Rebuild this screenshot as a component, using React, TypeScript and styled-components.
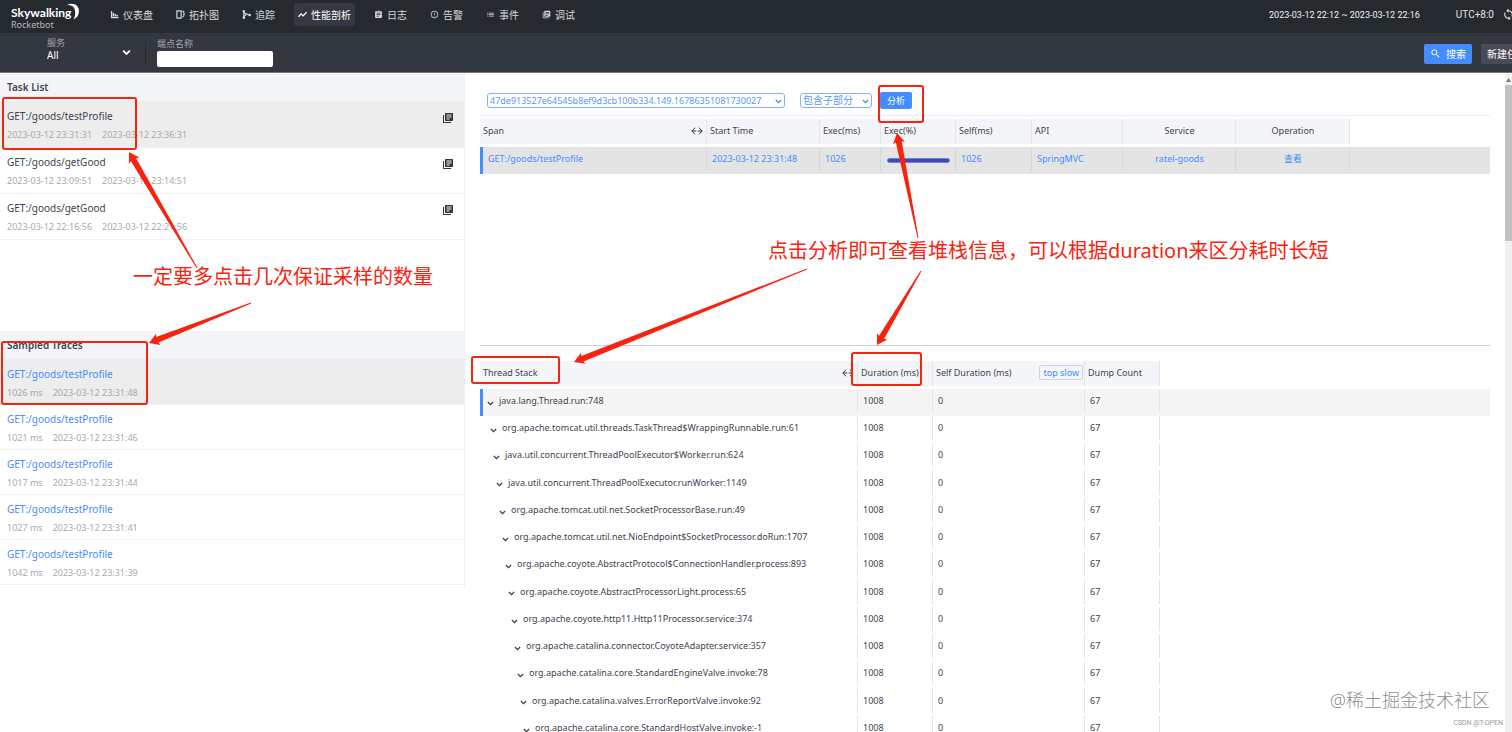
import React from "react";
import styled, { createGlobalStyle } from "styled-components";
import { MdAssignment, MdErrorOutline, MdLibraryBooks, MdList, MdSearch, MdSync } from "react-icons/md";

const GlobalStyle = createGlobalStyle`
  * { box-sizing: border-box; }
  body {
    margin: 0;
    overflow: hidden;
    background: #fff;
    color: #3d444f;
    font: 10px/14px "Noto Sans", "Noto Sans CJK SC", sans-serif;
  }
  button, input, select { font: inherit; }
  ul { list-style: none; margin: 0; padding: 0; }
`;

const Page = styled.div`
  position: relative;
  display: flex;
  flex-direction: column;
  height: 100vh;
  overflow: hidden;
`;

/* Top navigation */
const TopBar = styled.header`
  display: flex;
  align-items: center;
  flex: none;
  height: 33px;
  padding: 0 0 4px 11px;
  background: #252a2f;
  color: #e4e6e9;
`;

const Brand = styled.div`
  display: flex;
  flex-direction: column;
  width: 95px;
  padding-top: 6px;
`;

const BrandName = styled.div`
  display: flex;
  align-items: flex-start;
  color: #fff;
  font-family: Lato, sans-serif;
  font-size: 12px;
  font-weight: 700;
  line-height: 14px;
  svg { margin: -3px 0 0 -4px; }
`;

const BrandSub = styled.div`
  color: #b4b8bd;
  font-size: 9px;
  line-height: 10px;
`;

const Nav = styled.nav`
  display: flex;
  gap: 15px;
  flex: 1;
`;

const NavLink = styled.a<{ $active?: boolean }>`
  display: flex;
  align-items: center;
  gap: 4px;
  height: 23px;
  padding: 0 4px;
  border-radius: 3px;
  color: ${(p) => (p.$active ? "#fff" : "#d5d8dc")};
  background: ${(p) => (p.$active ? "#333842" : "transparent")};
  text-decoration: none;
  white-space: nowrap;
  svg { width: 9px; height: 9px; }
`;

const TimeRange = styled.span`
  margin-right: 36px;
  color: #f0f1f2;
  font-family: Roboto, sans-serif;
  font-size: 9px;
`;

const Zone = styled.span`
  margin-right: 8px;
  font-family: Roboto, sans-serif;
`;

const IconButton = styled.button`
  display: flex;
  padding: 0;
  border: 0;
  background: none;
  color: inherit;
`;

const Refresh = styled(IconButton)`
  margin-right: -3px;
`;

/* Filter bar */
const FilterBar = styled.div`
  display: flex;
  align-items: center;
  flex: none;
  height: 40px;
  padding-left: 47px;
  border-bottom: 1px solid #74757f;
  background: #333840;
  color: #e8eaec;
`;

const Field = styled.label`
  display: flex;
  flex-direction: column;
  color: #a3a7b3;
  font-size: 9px;
  line-height: 12px;
`;

const ServiceField = styled(Field)`
  position: relative;
  width: 84px;
  margin-bottom: 8px;
  svg { position: absolute; right: 0; bottom: 4px; color: #fff; }
`;

const ServiceSelect = styled.select`
  appearance: none;
  width: 100%;
  height: 12px;
  padding: 0;
  border: 0;
  background: transparent;
  color: #fff;
  font-size: 10px;
  line-height: 12px;
`;

const Divider = styled.div`
  width: 1px;
  height: 24px;
  margin: 0 11px 0 14px;
  background: #252a2f;
`;

const TextInput = styled.input`
  width: 116px;
  height: 16px;
  margin-top: 1px;
  padding: 0 4px;
  border: 0;
  border-radius: 2px;
  background: #fff;
`;

const Actions = styled.div`
  display: flex;
  gap: 9px;
  margin: 2px -21px 0 auto;
`;

const ActionButton = styled.button<{ $primary?: boolean }>`
  display: flex;
  align-items: center;
  gap: 5px;
  height: 20px;
  padding: 0 6px;
  border: 0;
  border-radius: 2px;
  background: ${(p) => (p.$primary ? "#448dfe" : "#484b56")};
  color: #fff;
  white-space: nowrap;
`;

/* Body */
const Body = styled.main`
  display: flex;
  flex: 1;
  min-height: 0;
`;

const Side = styled.aside`
  flex: none;
  align-self: flex-start;
  width: 465px;
  padding-bottom: 2px;
  border-right: 1px solid #eceef1;
`;

const TaskPanel = styled.section`
  height: 258px;
`;

const PanelTitle = styled.h2`
  display: flex;
  align-items: center;
  height: 29px;
  margin: 0;
  padding: 0 7px;
  border-bottom: 1px solid #eceef1;
  background: #f3f5f9;
  font-size: 10px;
  font-weight: 600;
`;

const Item = styled.li<{ $selected?: boolean; $tall?: boolean }>`
  display: flex;
  justify-content: space-between;
  align-items: flex-start;
  height: ${(p) => (p.$tall ? 46 : 45)}px;
  padding: 7px 10px 0 7px;
  border-bottom: 1px solid #f0f1f3;
  background: ${(p) => (p.$selected ? "#ededed" : "#fff")};
`;

const ItemName = styled.div<{ $link?: boolean }>`
  color: ${(p) => (p.$link ? "#448dfe" : "#3d444f")};
`;

const ItemMeta = styled.div`
  display: flex;
  gap: 10px;
  margin-top: 5px;
  color: #a7a9ae;
  font-size: 9px;
`;

const CopyButton = styled(IconButton)`
  margin-top: 3px;
  color: #333;
`;

const Detail = styled.section`
  flex: 1;
  min-width: 0;
  padding: 19px 15px 0;
  font-size: 9px;
`;

const Toolbar = styled.div`
  display: flex;
  align-items: center;
  height: 24px;
  padding: 0 0 6px 7px;
  border-bottom: 1px solid #eee;
`;

const SelectBox = styled.div<{ $width: number; $large?: boolean }>`
  position: relative;
  width: ${(p) => p.$width}px;
  margin-right: 15px;
  color: #448dfe;
  font-size: ${(p) => (p.$large ? 10 : 9)}px;
  svg { position: absolute; right: 3px; top: 5px; }
`;

const Select = styled.select`
  appearance: none;
  display: block;
  width: 100%;
  height: 15px;
  padding: 0 2px;
  border: 1px solid #84b2f8;
  border-radius: 3px;
  background: #fff;
  color: #5b97f3;
  line-height: 13px;
`;

const Analyze = styled.button`
  width: 32px;
  height: 17px;
  margin-left: -7px;
  padding: 0;
  border: 0;
  border-radius: 2px;
  background: #448dfe;
  color: #fff;
`;

const SpanArea = styled.div`
  height: 230px;
  padding-top: 3px;
  border-bottom: 1px solid #ccc;
`;

const StackArea = styled.div`
  padding-top: 15px;
`;

const Table = styled.table`
  width: 100%;
  border-collapse: separate;
  border-spacing: 0;
  table-layout: fixed;
`;

const Th = styled.th<{ $center?: boolean; $blank?: boolean }>`
  height: 28px;
  padding: 0 3px 2px;
  border-bottom: 3px solid #fff;
  background: ${(p) => (p.$blank ? "#fff" : "#f3f5f9")};
  background-clip: padding-box;
  box-shadow: ${(p) => (p.$blank ? "none" : "inset -1px 0 #e4e6ea")};
  font-weight: 400;
  text-align: ${(p) => (p.$center ? "center" : "left")};
  white-space: nowrap;
`;

const HeadRow = styled.div`
  display: flex;
  align-items: center;
  justify-content: space-between;
`;

const Td = styled.td<{ $center?: boolean }>`
  padding: 0 5px 3px;
  background: linear-gradient(#e4e5e8, #e4e5e8) right top / 1px calc(100% - 3px) no-repeat;
  text-align: ${(p) => (p.$center ? "center" : "left")};
  white-space: nowrap;
  &:last-child { background: none; }
`;

const SpanRow = styled.tr`
  height: 27px;
  background: #e4e4e4;
  color: #448dfe;
  td { background-image: linear-gradient(#d6d7da, #d6d7da); }
  td:first-child { border-left: 3px solid #448dfe; }
  a { color: inherit; text-decoration: none; }
`;

const StackRow = styled.tr<{ $selected?: boolean }>`
  height: 27px;
  background: ${(p) => (p.$selected ? "#f5f5f5" : "#fff")};
  td:first-child { border-left: 3px solid ${(p) => (p.$selected ? "#448dfe" : "transparent")}; padding-left: 4px; }
  &:nth-child(4n) { height: 28px; }
`;

const Meter = styled.div`
  height: 5px;
  margin: 2px 1px 0;
  border: 1px solid #448dfe;
  border-radius: 3px;
  background: #5b3fa8;
`;

const Frame = styled.div<{ $level: number }>`
  display: flex;
  align-items: center;
  gap: 5px;
  padding-left: ${(p) => p.$level * 3}px;
  svg { margin-top: 4px; }
`;

const TopSlow = styled.button`
  height: 15px;
  margin: -1px -1px -1px 0;
  padding: 0 3px;
  border: 1px solid #cfd6e2;
  border-radius: 2px;
  background: #f3f5f9;
  color: #448dfe;
  line-height: 13px;
`;

const Scrollbar = styled.div`
  display: flex;
  flex-direction: column;
  align-items: center;
  gap: 3px;
  width: 7px;
  padding-top: 5px;
  background: #f1f1f1;
`;

const Thumb = styled.div`
  width: 7px;
  height: 156px;
  background: #c1c1c1;
`;

/* Notes drawn over the page */
const Overlay = styled.svg`
  position: absolute;
  inset: 0;
  width: 100%;
  height: 100%;
  pointer-events: none;
`;

const Note = styled.p<{ $x: number; $y: number }>`
  position: absolute;
  left: ${(p) => p.$x}px;
  top: ${(p) => p.$y}px;
  margin: 0;
  color: #f8230f;
  font-size: 20px;
  line-height: 28px;
  white-space: nowrap;
`;

const Watermark = styled.div`
  position: absolute;
  right: 22px;
  bottom: 20px;
  color: #8f8f8f;
  font-size: 18px;
  font-weight: 300;
  line-height: 24px;
`;

const Credit = styled.div`
  position: absolute;
  right: 9px;
  bottom: 4px;
  color: #999;
  font: 7px/10px Roboto, sans-serif;
`;

const Chevron = ({ size = 7 }: { size?: number }) => (
  <svg width={size} height={size} viewBox="0 0 8 8" fill="none" stroke="currentColor" strokeWidth="1.5">
    <path d="M1 2.3 4 5.3 7 2.3" />
  </svg>
);

const ResizeIcon = styled.svg`
  margin-right: 1px;
`;

const Resize = () => (
  <ResizeIcon width="12" height="8" viewBox="0 0 12 8" fill="none" stroke="#333" strokeWidth="1">
    <path d="M4 .7.8 4 4 7.300M8 .7 11.200 4 8 7.300M1 4H5.300M6.700 4H11" />
  </ResizeIcon>
);

const ChartIcon = () => (
  <svg viewBox="0 0 10 10" fill="currentColor">
    <path d="M1 1h1.400v6.800H9.500V9.200H1zM3 3h1.600v4.200H3zM5 4.500h1.600v2.700H5zM7 5.300h1.800v1.900H7z" />
  </svg>
);

const TopologyIcon = () => (
  <svg viewBox="0 0 10 10" fill="none" stroke="currentColor" strokeWidth="1.300">
    <path d="M1 1h4.700v8H1zM7.300 1c2.200 1 2.200 5.500 0 7" />
  </svg>
);

const TraceIcon = () => (
  <svg viewBox="0 0 10 10" fill="none" stroke="currentColor" strokeWidth="1.300">
    <path d="M2 1v8M2 3 8 5.500M2 7.500 5 4.500" />
    <circle cx="2" cy="1.500" r=".8" fill="currentColor" />
    <circle cx="2" cy="8.500" r=".8" fill="currentColor" />
    <circle cx="8.500" cy="5.500" r=".8" fill="currentColor" />
  </svg>
);

const ProfileIcon = () => (
  <svg viewBox="0 0 10 10" fill="none" stroke="currentColor" strokeWidth="1.400">
    <path d="M.5 7.500 3.500 4.300 5.700 6.500 9.500 2.500" />
  </svg>
);

const navItems = [
  { label: "仪表盘", icon: <ChartIcon /> },
  { label: "拓扑图", icon: <TopologyIcon /> },
  { label: "追踪", icon: <TraceIcon /> },
  { label: "性能剖析", icon: <ProfileIcon />, active: true },
  { label: "日志", icon: <MdAssignment /> },
  { label: "告警", icon: <MdErrorOutline stroke="currentColor" /> },
  { label: "事件", icon: <MdList stroke="currentColor" /> },
  { label: "调试", icon: <MdLibraryBooks /> },
];

const tasks = [
  ["GET:/goods/testProfile", "2023-03-12 23:31:31", "2023-03-12 23:36:31"],
  ["GET:/goods/getGood", "2023-03-12 23:09:51", "2023-03-12 23:14:51"],
  ["GET:/goods/getGood", "2023-03-12 22:16:56", "2023-03-12 22:21:56"],
];

const traces = [
  ["1026 ms", "2023-03-12 23:31:48"],
  ["1021 ms", "2023-03-12 23:31:46"],
  ["1017 ms", "2023-03-12 23:31:44"],
  ["1027 ms", "2023-03-12 23:31:41"],
  ["1042 ms", "2023-03-12 23:31:39"],
];

const frames = [
  "java.lang.Thread.run:748",
  "org.apache.tomcat.util.threads.TaskThread$WrappingRunnable.run:61",
  "java.util.concurrent.ThreadPoolExecutor$Worker.run:624",
  "java.util.concurrent.ThreadPoolExecutor.runWorker:1149",
  "org.apache.tomcat.util.net.SocketProcessorBase.run:49",
  "org.apache.tomcat.util.net.NioEndpoint$SocketProcessor.doRun:1707",
  "org.apache.coyote.AbstractProtocol$ConnectionHandler.process:893",
  "org.apache.coyote.AbstractProcessorLight.process:65",
  "org.apache.coyote.http11.Http11Processor.service:374",
  "org.apache.catalina.connector.CoyoteAdapter.service:357",
  "org.apache.catalina.core.StandardEngineValve.invoke:78",
  "org.apache.catalina.valves.ErrorReportValve.invoke:92",
  "org.apache.catalina.core.StandardHostValve.invoke:-1",
];

const boxes = [
  [3, 98, 133, 51],
  [2, 342, 145, 62],
  [879, 86, 44, 36],
  [472, 357, 87, 26],
  [852, 353, 69, 32],
];

const arrows = [
  [197, 268, 129, 152],
  [251, 303, 149, 343],
  [918, 238, 897, 133],
  [807, 269, 574, 362],
  [921, 271, 877, 345],
];

/* A shaft that widens from a fine tail to a barbed head. */
function arrowPoints([x1, y1, x2, y2]: number[]) {
  const length = Math.hypot(x2 - x1, y2 - y1);
  const ux = (x2 - x1) / length;
  const uy = (y2 - y1) / length;
  const at = (back: number, side: number) => `${x2 - ux * back - uy * side},${y2 - uy * back + ux * side}`;
  return [at(length, 0.5), at(9, 3), at(10, 6), at(0, 0), at(10, -6), at(9, -3), at(length, -0.5)].join(" ");
}

export default function App() {
  return (
    <Page>
      <GlobalStyle />
      <TopBar>
        <Brand>
          <BrandName>
            Skywalking
            <svg width="13" height="17" viewBox="0 0 13 17" fill="#fff">
              <path d="M0 2C6-1 12 2 12 8 12 12 10 15 6.500 16.500 9 12 9 5 5 3 3.500 2.200 2 2 0 2Z" />
            </svg>
          </BrandName>
          <BrandSub>Rocketbot</BrandSub>
        </Brand>
        <Nav>
          {navItems.map((n) => (
            <NavLink key={n.label} href="#" $active={n.active}>
              {n.icon}
              {n.label}
            </NavLink>
          ))}
        </Nav>
        <TimeRange>2023-03-12 22:12 ~ 2023-03-12 22:16</TimeRange>
        <Zone>UTC+8:0</Zone>
        <Refresh aria-label="Refresh"><MdSync size={13} stroke="currentColor" /></Refresh>
      </TopBar>

      <FilterBar>
        <ServiceField>
          服务
          <ServiceSelect defaultValue="All"><option>All</option></ServiceSelect>
          <Chevron size={9} />
        </ServiceField>
        <Divider />
        <Field>
          端点名称
          <TextInput type="text" />
        </Field>
        <Actions>
          <ActionButton $primary><MdSearch size={11} />搜索</ActionButton>
          <ActionButton>新建任务</ActionButton>
        </Actions>
      </FilterBar>

      <Body>
        <Side>
          <TaskPanel>
            <PanelTitle>Task List</PanelTitle>
            <ul>
              {tasks.map(([name, start, end], i) => (
                <Item key={start} $tall $selected={i === 0}>
                  <div>
                    <ItemName>{name}</ItemName>
                    <ItemMeta><span>{start}</span><span>{end}</span></ItemMeta>
                  </div>
                  <CopyButton aria-label="View task"><MdLibraryBooks size={12} /></CopyButton>
                </Item>
              ))}
            </ul>
          </TaskPanel>
          <PanelTitle>Sampled Traces</PanelTitle>
          <ul>
            {traces.map(([duration, time], i) => (
              <Item key={time} $selected={i === 0}>
                <div>
                  <ItemName $link>GET:/goods/testProfile</ItemName>
                  <ItemMeta><span>{duration}</span><span>{time}</span></ItemMeta>
                </div>
              </Item>
            ))}
          </ul>
        </Side>

        <Detail>
          <Toolbar>
            <SelectBox $width={298}>
              <Select aria-label="Trace">
                <option>47de913527e64545b8ef9d3cb100b334.149.16786351081730027</option>
              </Select>
              <Chevron />
            </SelectBox>
            <SelectBox $width={72} $large>
              <Select aria-label="Mode"><option>包含子部分</option></Select>
              <Chevron />
            </SelectBox>
            <Analyze>分析</Analyze>
          </Toolbar>

          <SpanArea>
            <Table>
              <colgroup>
                {[227, 113, 61, 75, 76, 91, 113, 114].map((w, i) => <col key={i} width={w} />)}
                <col />
              </colgroup>
              <thead>
                <tr>
                  <Th><HeadRow>Span<Resize /></HeadRow></Th>
                  <Th>Start Time</Th>
                  <Th>Exec(ms)</Th>
                  <Th>Exec(%)</Th>
                  <Th>Self(ms)</Th>
                  <Th>API</Th>
                  <Th $center>Service</Th>
                  <Th $center>Operation</Th>
                  <Th $blank />
                </tr>
              </thead>
              <tbody>
                <SpanRow>
                  <Td>GET:/goods/testProfile</Td>
                  <Td>2023-03-12 23:31:48</Td>
                  <Td>1026</Td>
                  <Td><Meter /></Td>
                  <Td>1026</Td>
                  <Td>SpringMVC</Td>
                  <Td $center>ratel-goods</Td>
                  <Td $center><a href="#">查看</a></Td>
                  <Td />
                </SpanRow>
              </tbody>
            </Table>
          </SpanArea>

          <StackArea>
            <Table>
              <colgroup>
                {[378, 75, 152, 75].map((w, i) => <col key={i} width={w} />)}
                <col />
              </colgroup>
              <thead>
                <tr>
                  <Th><HeadRow>Thread Stack<Resize /></HeadRow></Th>
                  <Th>Duration (ms)</Th>
                  <Th><HeadRow>Self Duration (ms)<TopSlow>top slow</TopSlow></HeadRow></Th>
                  <Th>Dump Count</Th>
                  <Th $blank />
                </tr>
              </thead>
              <tbody>
                {frames.map((name, i) => (
                  <StackRow key={name} $selected={i === 0}>
                    <Td><Frame $level={i}><Chevron />{name}</Frame></Td>
                    <Td>1008</Td>
                    <Td>0</Td>
                    <Td>67</Td>
                    <Td />
                  </StackRow>
                ))}
              </tbody>
            </Table>
          </StackArea>
        </Detail>

        <Scrollbar>
          <svg width="7" height="4" viewBox="0 0 7 4" fill="#777"><path d="M3.500 0 6 4H1z" /></svg>
          <Thumb />
        </Scrollbar>
      </Body>

      <Overlay fill="none" stroke="#f8230f" strokeWidth="2">
        {boxes.map(([x, y, w, h]) => <rect key={`${x}-${y}`} x={x} y={y} width={w} height={h} rx="2" />)}
        {arrows.map((a) => <polygon key={a.join()} points={arrowPoints(a)} fill="#f8230f" stroke="none" />)}
      </Overlay>
      <Note $x={133} $y={263}>一定要多点击几次保证采样的数量</Note>
      <Note $x={768} $y={237}>点击分析即可查看堆栈信息，可以根据duration来区分耗时长短</Note>
      <Watermark>@稀土掘金技术社区</Watermark>
      <Credit>CSDN @T-OPEN</Credit>
    </Page>
  );
}
